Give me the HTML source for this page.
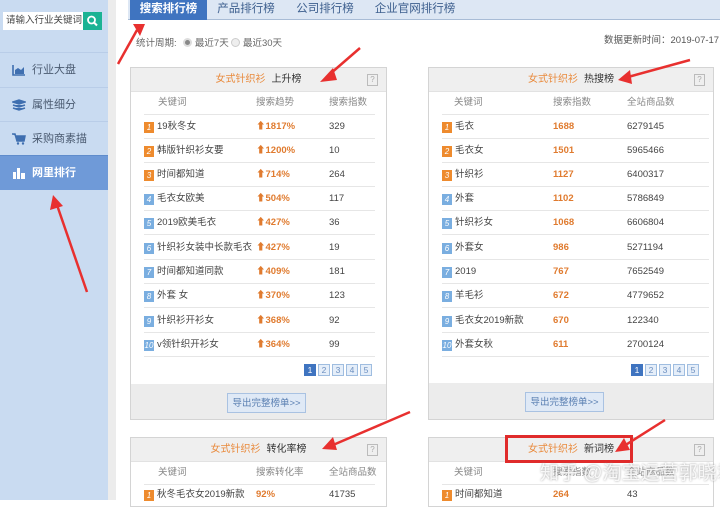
<!DOCTYPE html>
<html><head><meta charset="utf-8"><style>
*{margin:0;padding:0;box-sizing:border-box}
body{width:720px;height:500px;overflow:hidden;background:#fff;font-family:"Liberation Sans","Noto Sans CJK SC",sans-serif;font-size:10px;color:#555;position:relative}
.a{position:absolute}
#side{left:0;top:0;width:108px;height:500px;background:#c9dbf1}
#strip{left:108px;top:0;width:8px;height:500px;background:#ececec}
.mi{position:absolute;left:0;width:108px;height:34px;border-top:1px solid #b9cde8;font-size:11px;color:#4a5a70;line-height:34px;padding-left:32px}
.ic{position:absolute;left:12px;top:11px;width:14px;height:12px}
.tab{position:absolute;top:0;height:20px;line-height:19px;font-size:11.5px;color:#3d5f8e;text-align:center}
.panel{position:absolute;border:1px solid #d4d4d4;background:#fff;overflow:hidden}
.ph{height:24px;background:#efefef;text-align:center;line-height:24px;font-size:10px;color:#333;border-bottom:1px solid #e2e2e2}
.ph b{color:#e98a3c;font-weight:normal;margin-right:6px}
.q{position:absolute;right:8px;top:6px;width:11px;height:12px;border:1px solid #bbb;font-size:8px;line-height:10px;color:#aaa;text-align:center}
.row{position:absolute;height:24px;line-height:24px;border-bottom:1px solid #e6e6e6;font-size:9.5px;color:#444;white-space:nowrap}
.row span{position:absolute}
.bd{display:inline-block;width:10px;height:11px;line-height:11px;font-size:8px;color:#fff;text-align:center;background:#7aaee0;margin-right:3px;vertical-align:-1px}
.o{background:#ee8b2e}
.hd{color:#888}
.or{color:#e07b2f;font-weight:bold}
.pg{position:absolute;width:12px;height:12px;border:1px solid #9fbde0;background:#e5eef9;color:#6c8fc0;font-size:8.5px;text-align:center;line-height:11px}
.pg.on{background:#3f74c0;color:#fff;border-color:#3f74c0}
.ft{position:absolute;left:0;right:0;height:38px;background:#ececec}
.btn{position:absolute;width:79px;height:20px;border:1px solid #a9c2e2;background:#dfe9f6;color:#5a7fb2;font-size:9.5px;text-align:center;line-height:19px}
</style></head><body>
<div id="side" class="a">
 <div class="a" style="left:3px;top:12px;width:80px;height:18px;background:#fff;font-size:9.5px;line-height:18px;padding-left:3px;color:#444">请输入行业关键词</div>
 <div class="a" style="left:83px;top:12px;width:19px;height:18px;background:#1bb394"><svg width="19" height="18"><circle cx="8.5" cy="8" r="3.5" stroke="#fff" stroke-width="1.8" fill="none"/><path d="M11 10.5l3 3" stroke="#fff" stroke-width="2"/></svg></div>
 <div class="mi" style="top:52px"><svg class="ic" viewBox="0 0 14 12"><path d="M1 1v10h12" stroke="#3f6fb0" stroke-width="1.6" fill="none"/><path d="M3 10V6l3-2 3 2 3-3v7z" fill="#3f6fb0"/></svg>行业大盘</div>
 <div class="mi" style="top:87px"><svg class="ic" viewBox="0 0 14 12"><path d="M1 3l6-2 6 2-6 2z M1 6l6 2 6-2 M1 9l6 2 6-2" stroke="#3f6fb0" stroke-width="1.5" fill="#3f6fb0"/></svg>属性细分</div>
 <div class="mi" style="top:121px"><svg class="ic" viewBox="0 0 14 12"><path d="M0 1h3l2 7h7l1-5H4" stroke="#3f6fb0" stroke-width="1.5" fill="#3f6fb0"/><circle cx="6" cy="10.5" r="1.2" fill="#3f6fb0"/><circle cx="11" cy="10.5" r="1.2" fill="#3f6fb0"/></svg>采购商素描</div>
 <div class="mi" style="top:155px;height:35px;background:#6f9ad8;color:#fff;font-weight:bold;border-top:1px solid #5f8ccc"><svg class="ic" viewBox="0 0 14 12"><path d="M1 5h3v7H1zM5 1h3v11H5zM9 6h4v6H9z" fill="#fff"/></svg>网里排行</div>
</div>
<div id="strip" class="a"></div>
<div class="a" style="left:128px;top:0;width:592px;height:20px;background:#dde7f4;border-bottom:1px solid #a8bcd6"></div>
<div class="tab" style="left:130px;width:77px;background:#3f74c0;color:#fff;font-weight:bold">搜索排行榜</div>
<div class="tab" style="left:207px;width:78px">产品排行榜</div>
<div class="tab" style="left:285px;width:80px">公司排行榜</div>
<div class="tab" style="left:365px;width:100px">企业官网排行榜</div>
<div class="a" style="left:136px;top:35px;font-size:9.5px;color:#666">统计周期: <span style="display:inline-block;width:9px;height:9px;border-radius:50%;background:#888;border:2px solid #ddd;vertical-align:-1px;margin-left:4px"></span> 最近7天 <span style="display:inline-block;width:9px;height:9px;border-radius:50%;background:#eee;border:1px solid #ccc;vertical-align:-1px"></span> 最近30天</div>
<div class="a" style="left:604px;top:32px;font-size:9.5px;color:#555">数据更新时间：2019-07-17</div>

<div class="panel" style="left:130px;top:67px;width:257px;height:353px">
 <div class="ph"><b>女式针织衫</b>上升榜<div class="q">?</div></div>
 <div class="row hd" style="left:13px;width:231px;top:23px"><span style="left:14px">关键词</span><span style="left:112px">搜索趋势</span><span style="left:185px">搜索指数</span></div>
 <div class="row" style="left:13px;width:231px;top:47px"><span><i class="bd o">1</i>19秋冬女</span><span style="left:112px" class="or">⬆1817%</span><span style="left:185px">329</span></div>
 <div class="row" style="left:13px;width:231px;top:71px"><span><i class="bd o">2</i>韩版针织衫女要</span><span style="left:112px" class="or">⬆1200%</span><span style="left:185px">10</span></div>
 <div class="row" style="left:13px;width:231px;top:95px"><span><i class="bd o">3</i>时间都知道</span><span style="left:112px" class="or">⬆714%</span><span style="left:185px">264</span></div>
 <div class="row" style="left:13px;width:231px;top:119px"><span><i class="bd">4</i>毛衣女欧美</span><span style="left:112px" class="or">⬆504%</span><span style="left:185px">117</span></div>
 <div class="row" style="left:13px;width:231px;top:143px"><span><i class="bd">5</i>2019欧美毛衣</span><span style="left:112px" class="or">⬆427%</span><span style="left:185px">36</span></div>
 <div class="row" style="left:13px;width:231px;top:168px"><span><i class="bd">6</i>针织衫女装中长款毛衣</span><span style="left:112px" class="or">⬆427%</span><span style="left:185px">19</span></div>
 <div class="row" style="left:13px;width:231px;top:192px"><span><i class="bd">7</i>时间都知道同款</span><span style="left:112px" class="or">⬆409%</span><span style="left:185px">181</span></div>
 <div class="row" style="left:13px;width:231px;top:216px"><span><i class="bd">8</i>外套 女</span><span style="left:112px" class="or">⬆370%</span><span style="left:185px">123</span></div>
 <div class="row" style="left:13px;width:231px;top:241px"><span><i class="bd">9</i>针织衫开衫女</span><span style="left:112px" class="or">⬆368%</span><span style="left:185px">92</span></div>
 <div class="row" style="left:13px;width:231px;top:265px"><span><i class="bd">10</i>v领针织开衫女</span><span style="left:112px" class="or">⬆364%</span><span style="left:185px">99</span></div>
 <div class="pg on" style="left:173px;top:296px">1</div><div class="pg" style="left:187px;top:296px">2</div><div class="pg" style="left:201px;top:296px">3</div><div class="pg" style="left:215px;top:296px">4</div><div class="pg" style="left:229px;top:296px">5</div>
 <div class="ft" style="top:316px"></div>
 <div class="btn" style="left:96px;top:325px">导出完整榜单&gt;&gt;</div>
</div>

<div class="panel" style="left:428px;top:67px;width:286px;height:353px">
 <div class="ph"><b>女式针织衫</b>热搜榜<div class="q">?</div></div>
 <div class="row hd" style="left:13px;width:267px;top:23px"><span style="left:12px">关键词</span><span style="left:111px">搜索指数</span><span style="left:185px">全站商品数</span></div>
 <div class="row" style="left:13px;width:267px;top:47px"><span><i class="bd o">1</i>毛衣</span><span style="left:111px" class="or">1688</span><span style="left:185px">6279145</span></div>
 <div class="row" style="left:13px;width:267px;top:71px"><span><i class="bd o">2</i>毛衣女</span><span style="left:111px" class="or">1501</span><span style="left:185px">5965466</span></div>
 <div class="row" style="left:13px;width:267px;top:95px"><span><i class="bd o">3</i>针织衫</span><span style="left:111px" class="or">1127</span><span style="left:185px">6400317</span></div>
 <div class="row" style="left:13px;width:267px;top:119px"><span><i class="bd">4</i>外套</span><span style="left:111px" class="or">1102</span><span style="left:185px">5786849</span></div>
 <div class="row" style="left:13px;width:267px;top:143px"><span><i class="bd">5</i>针织衫女</span><span style="left:111px" class="or">1068</span><span style="left:185px">6606804</span></div>
 <div class="row" style="left:13px;width:267px;top:168px"><span><i class="bd">6</i>外套女</span><span style="left:111px" class="or">986</span><span style="left:185px">5271194</span></div>
 <div class="row" style="left:13px;width:267px;top:192px"><span><i class="bd">7</i>2019</span><span style="left:111px" class="or">767</span><span style="left:185px">7652549</span></div>
 <div class="row" style="left:13px;width:267px;top:216px"><span><i class="bd">8</i>羊毛衫</span><span style="left:111px" class="or">672</span><span style="left:185px">4779652</span></div>
 <div class="row" style="left:13px;width:267px;top:241px"><span><i class="bd">9</i>毛衣女2019新款</span><span style="left:111px" class="or">670</span><span style="left:185px">122340</span></div>
 <div class="row" style="left:13px;width:267px;top:265px"><span><i class="bd">10</i>外套女秋</span><span style="left:111px" class="or">611</span><span style="left:185px">2700124</span></div>
 <div class="pg on" style="left:202px;top:296px">1</div><div class="pg" style="left:216px;top:296px">2</div><div class="pg" style="left:230px;top:296px">3</div><div class="pg" style="left:244px;top:296px">4</div><div class="pg" style="left:258px;top:296px">5</div>
 <div class="ft" style="top:315px"></div>
 <div class="btn" style="left:96px;top:324px">导出完整榜单&gt;&gt;</div>
</div>

<div class="panel" style="left:130px;top:437px;width:257px;height:70px">
 <div class="ph"><b>女式针织衫</b>转化率榜<div class="q">?</div></div>
 <div class="row hd" style="left:13px;width:231px;top:23px"><span style="left:14px">关键词</span><span style="left:112px">搜索转化率</span><span style="left:185px">全站商品数</span></div>
 <div class="row" style="left:13px;width:231px;top:45px"><span><i class="bd o">1</i>秋冬毛衣女2019新款</span><span style="left:112px" class="or">92%</span><span style="left:185px">41735</span></div>
</div>
<div class="panel" style="left:428px;top:437px;width:286px;height:70px">
 <div class="ph"><b>女式针织衫</b>新词榜<div class="q">?</div></div>
 <div class="row hd" style="left:13px;width:267px;top:23px"><span style="left:12px">关键词</span><span style="left:111px">搜索指数</span><span style="left:185px">全站商品数</span></div>
 <div class="row" style="left:13px;width:267px;top:45px"><span><i class="bd o">1</i>时间都知道</span><span style="left:111px" class="or">264</span><span style="left:185px">43</span></div>
</div>
<div class="a" style="left:505px;top:435px;width:128px;height:28px;border:3px solid #e02b2b"></div>
<div class="a" style="left:540px;top:458px;font-size:19px;color:rgba(255,255,255,0.85);text-shadow:0 0 2px #999;white-space:nowrap">知乎 @淘宝运营郭晓君</div>

<svg class="a" style="left:0;top:0" width="720" height="500">
<g stroke="#e8302f" stroke-width="2.5" fill="#e8302f">
<line x1="118" y1="64" x2="137" y2="30"/><polygon points="133,24 145,24 140,36" stroke="none"/>
<line x1="360" y1="48" x2="330" y2="74"/><polygon points="320,82 333,68 337,80" stroke="none"/>
<line x1="690" y1="60" x2="628" y2="77"/><polygon points="618,80 630,70 632,84" stroke="none"/>
<line x1="87" y1="292" x2="57" y2="205"/><polygon points="53,195 50,210 63,206" stroke="none"/>
<line x1="410" y1="412" x2="333" y2="445"/><polygon points="322,449 333,437 337,450" stroke="none"/>
<line x1="665" y1="420" x2="624" y2="446"/><polygon points="615,452 624,438 630,450" stroke="none"/>
</g></svg>
</body></html>
